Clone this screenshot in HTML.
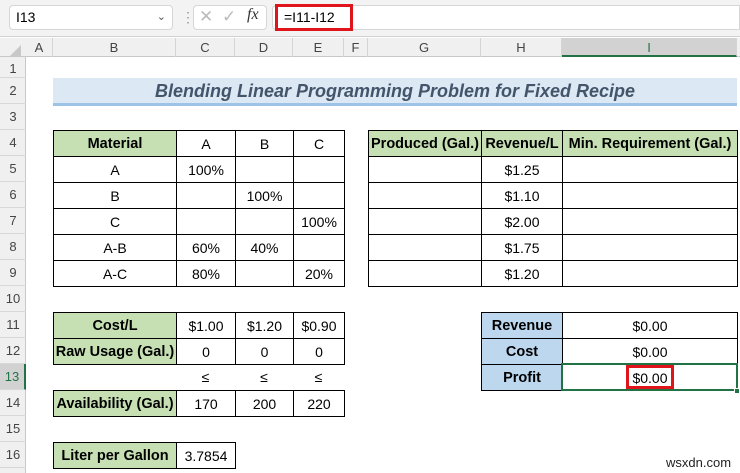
<!DOCTYPE html>
<html><head><style>
*{margin:0;padding:0;box-sizing:border-box}
body{width:740px;height:473px;overflow:hidden;background:#fff;font-family:"Liberation Sans",sans-serif;position:relative;color:#000}
.a{position:absolute}
table{position:absolute;border-collapse:collapse;table-layout:fixed;font-size:14px}
td{border:1px solid #000;text-align:center;height:26px;padding:0;overflow:hidden;white-space:nowrap}
.g{background:#c6e0b4;font-weight:bold;font-size:14.5px}
.b{background:#bdd7ee;font-weight:bold;font-size:14.5px}
.ch{position:absolute;top:38px;height:19px;font-size:13px;color:#444;text-align:center;line-height:19px;border-right:1px solid #d4d4d4}
.rh{position:absolute;left:0;width:26px;height:26px;font-size:13px;color:#444;text-align:center;line-height:26px;border-bottom:1px solid #d8d8d8}
</style></head><body>
<div class="a" style="left:0;top:0;width:740px;height:37px;background:#f3f3f3;border-bottom:1px solid #d0d0d0"></div>
<div class="a" style="left:9px;top:5px;width:164px;height:25px;background:#fff;border:1px solid #d6d6d6;border-radius:4px;font-size:14px;line-height:23px;padding-left:6px">I13<span style="position:absolute;right:6px;top:0;font-size:11px;color:#555">&#8964;</span></div>
<div class="a" style="left:181px;top:9px;color:#999;font-size:14px">&#8942;</div>
<div class="a" style="left:193px;top:5px;width:74px;height:25px;background:#fff;border:1px solid #d6d6d6;border-radius:4px"></div>
<div class="a" style="left:199px;top:7px;font-size:17px;color:#bbb">&#10005;</div>
<div class="a" style="left:222px;top:7px;font-size:17px;color:#bbb">&#10003;</div>
<div class="a" style="left:247px;top:6px;font-size:16px;font-style:italic;font-family:'Liberation Serif',serif;color:#333"><i>fx</i></div>
<div class="a" style="left:272px;top:5px;width:468px;height:25px;background:#fff;border:1px solid #d6d6d6;border-radius:4px 0 0 4px"></div>
<div class="a" style="left:275px;top:4px;width:78px;height:27px;border:3px solid #e0141b;font-size:14px;line-height:21px;padding-left:6px">=I11-I12</div>
<div class="a" style="left:0;top:38px;width:740px;height:19px;background:#f0f0f0;border-bottom:1px solid #c8c8c8"></div>
<div class="a" style="left:10px;top:45px;width:0;height:0;border-left:11px solid transparent;border-bottom:11px solid #c8c8c8"></div>
<div class="ch" style="left:26px;width:27px">A</div>
<div class="ch" style="left:53px;width:123px">B</div>
<div class="ch" style="left:176px;width:59px">C</div>
<div class="ch" style="left:235px;width:58px">D</div>
<div class="ch" style="left:293px;width:51px">E</div>
<div class="ch" style="left:344px;width:24px">F</div>
<div class="ch" style="left:368px;width:113px">G</div>
<div class="ch" style="left:481px;width:81px">H</div>
<div class="ch" style="left:562px;width:175px;background:#d2d2d2;border-bottom:2px solid #217346;color:#217346">I</div>
<div class="a" style="left:0;top:57px;width:26px;height:416px;background:#f0f0f0;border-right:1px solid #c8c8c8"></div>
<div class="rh" style="top:57px;height:21px;line-height:24px">1</div>
<div class="rh" style="top:78px">2</div>
<div class="rh" style="top:104px">3</div>
<div class="rh" style="top:130px">4</div>
<div class="rh" style="top:156px">5</div>
<div class="rh" style="top:182px">6</div>
<div class="rh" style="top:208px">7</div>
<div class="rh" style="top:234px">8</div>
<div class="rh" style="top:260px">9</div>
<div class="rh" style="top:286px">10</div>
<div class="rh" style="top:312px">11</div>
<div class="rh" style="top:338px">12</div>
<div class="rh" style="top:364px;background:#d2d2d2;color:#217346;border-right:2px solid #217346">13</div>
<div class="rh" style="top:390px">14</div>
<div class="rh" style="top:416px">15</div>
<div class="rh" style="top:442px">16</div>
<div class="a" style="left:53px;top:78px;width:684px;height:28px;background:#dce9f5;border-bottom:3px solid #9dc3e6;text-align:center;font-size:18px;font-weight:bold;font-style:italic;color:#44546a;line-height:26px">Blending Linear Programming Problem for Fixed Recipe</div>

<table style="left:53px;top:130px;width:292px">
<colgroup><col style="width:123px"><col style="width:59px"><col style="width:58px"><col style="width:51px"></colgroup>
<tr><td class="g">Material</td><td>A</td><td>B</td><td>C</td></tr>
<tr><td>A</td><td>100%</td><td></td><td></td></tr>
<tr><td>B</td><td></td><td>100%</td><td></td></tr>
<tr><td>C</td><td></td><td></td><td>100%</td></tr>
<tr><td>A-B</td><td>60%</td><td>40%</td><td></td></tr>
<tr><td>A-C</td><td>80%</td><td></td><td>20%</td></tr>
</table>
<table style="left:368px;top:130px;width:370px">
<colgroup><col style="width:113px"><col style="width:81px"><col style="width:175px"></colgroup>
<tr><td class="g">Produced (Gal.)</td><td class="g">Revenue/L</td><td class="g">Min. Requirement (Gal.)</td></tr>
<tr><td></td><td>$1.25</td><td></td></tr>
<tr><td></td><td>$1.10</td><td></td></tr>
<tr><td></td><td>$2.00</td><td></td></tr>
<tr><td></td><td>$1.75</td><td></td></tr>
<tr><td></td><td>$1.20</td><td></td></tr>
</table>
<table style="left:53px;top:312px;width:292px">
<colgroup><col style="width:123px"><col style="width:59px"><col style="width:58px"><col style="width:51px"></colgroup>
<tr><td class="g">Cost/L</td><td>$1.00</td><td>$1.20</td><td>$0.90</td></tr>
<tr><td class="g">Raw Usage (Gal.)</td><td>0</td><td>0</td><td>0</td></tr>
</table>
<div class="a" style="left:176px;top:364px;width:59px;text-align:center;font-size:14px;line-height:26px">&le;</div>
<div class="a" style="left:235px;top:364px;width:58px;text-align:center;font-size:14px;line-height:26px">&le;</div>
<div class="a" style="left:293px;top:364px;width:51px;text-align:center;font-size:14px;line-height:26px">&le;</div>
<table style="left:53px;top:390px;width:292px">
<colgroup><col style="width:123px"><col style="width:59px"><col style="width:58px"><col style="width:51px"></colgroup>
<tr><td class="g">Availability (Gal.)</td><td>170</td><td>200</td><td>220</td></tr>
</table>
<table style="left:53px;top:442px;width:183px">
<colgroup><col style="width:123px"><col style="width:59px"></colgroup>
<tr><td class="g">Liter per Gallon</td><td>3.7854</td></tr>
</table>
<table style="left:481px;top:312px;width:257px">
<colgroup><col style="width:81px"><col style="width:175px"></colgroup>
<tr><td class="b">Revenue</td><td>$0.00</td></tr>
<tr><td class="b">Cost</td><td>$0.00</td></tr>
<tr><td class="b">Profit</td><td>$0.00</td></tr>
</table>
<div class="a" style="left:561px;top:363px;width:177px;height:28px;border:2px solid #217346"></div>
<div class="a" style="left:734px;top:388px;width:6px;height:6px;background:#217346;border:1px solid #fff"></div>
<div class="a" style="left:626px;top:365px;width:48px;height:24px;border:3px solid #e0141b"></div>
<div class="a" style="left:666px;top:455px;font-size:13px;color:#222">wsxdn.com</div>
</body></html>
